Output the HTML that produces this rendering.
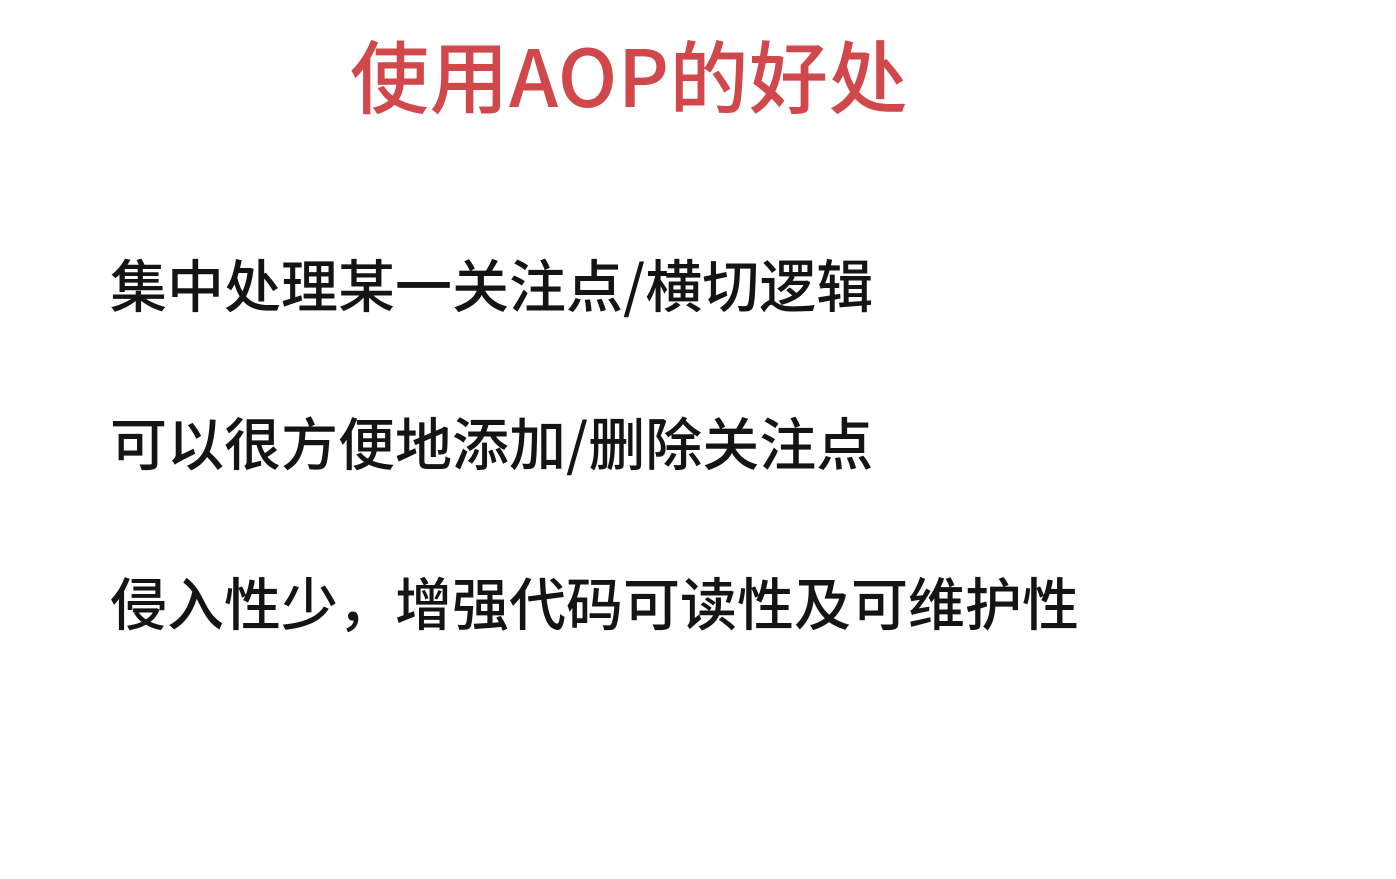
<!DOCTYPE html>
<html><head><meta charset="utf-8"><style>
html,body{margin:0;padding:0;background:#fff;width:1396px;height:879px;overflow:hidden}
div{position:absolute;white-space:nowrap;line-height:1;font-family:"Noto Sans CJK SC","Liberation Sans",sans-serif;font-weight:500}
.t{left:350px;top:33px;font-size:79px;color:#d0484c;letter-spacing:0.5px}
.l{left:110px;font-size:57px;color:#141414}
</style></head><body>
<div class="t">使用AOP的好处</div>
<div class="l" style="top:255px">集中处理某一关注点/横切逻辑</div>
<div class="l" style="top:413px">可以很方便地添加/删除关注点</div>
<div class="l" style="top:573px">侵入性少，增强代码可读性及可维护性</div>
</body></html>
